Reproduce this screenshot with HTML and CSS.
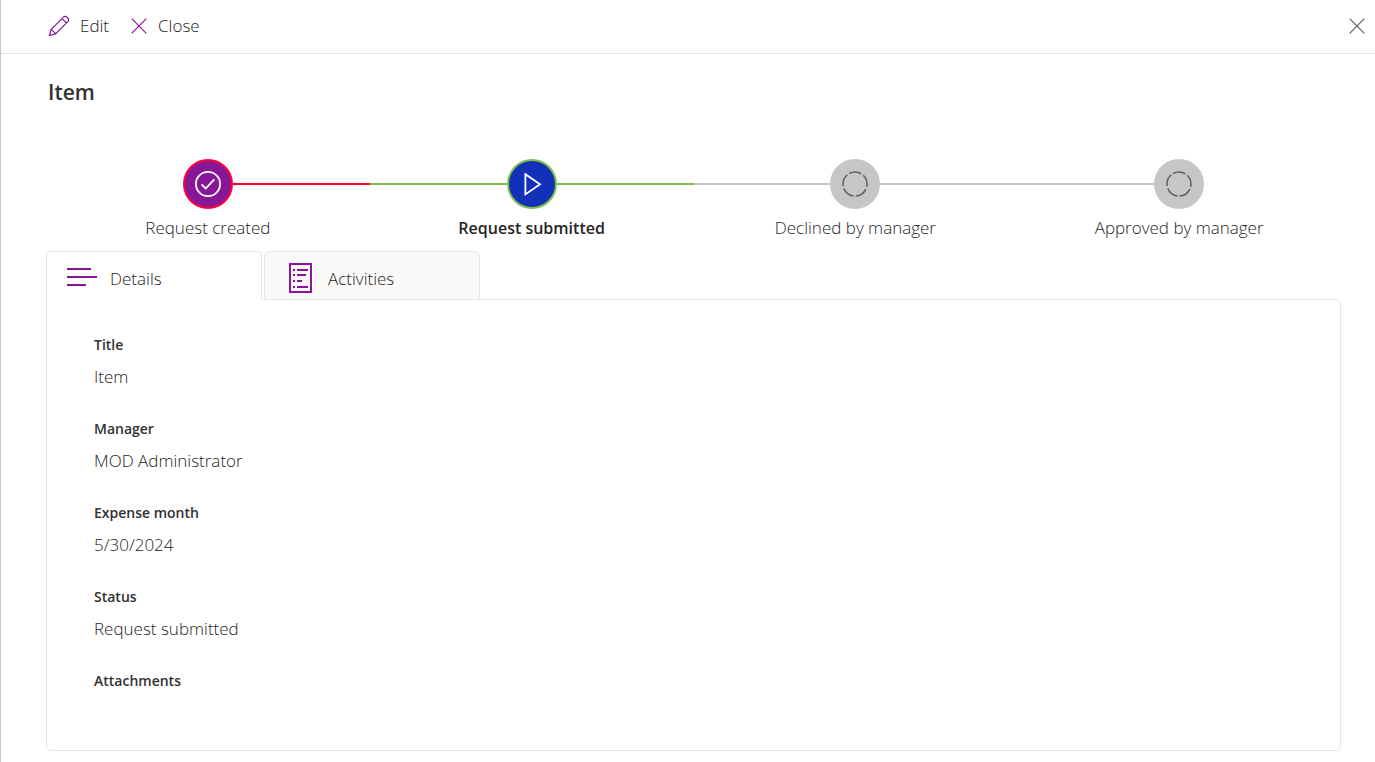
FILE: index.html
```html
<!DOCTYPE html>
<html lang="en">

<head>
    <meta charset="utf-8">
    <title>Item</title>
    <meta name="viewport" content="width=device-width, initial-scale=1">
    <link rel="stylesheet" href="styles.css">
</head>

<body>
    <header class="toolbar">
        <button type="button" class="btn_cmd">
            <svg class="icon" width="22" height="22" viewBox="0 0 22 22">
                <path d="M1.5 20.5l1.6-6L15.4 2.2a2.5 2.5 0 0 1 3.6 0l.8.8a2.5 2.5 0 0 1 0 3.6L7.5 18.9zM3.1 14.5a3 3 0 0 1 2.2 2.2 3 3 0 0 1 2.2 2.2M14 3.6l4.4 4.4" />
            </svg>
            <span>Edit</span>
        </button>
        <button type="button" class="btn_cmd">
            <svg class="icon" width="18" height="18" viewBox="0 0 18 18">
                <path d="M1.7 1.7l14.6 14.6M16.3 1.7L1.7 16.3" />
            </svg>
            <span>Close</span>
        </button>
        <button type="button" class="btn_dismiss" aria-label="Close panel">
            <svg width="16" height="16" viewBox="0 0 16 16">
                <path d="M.7.7l14.6 14.6M15.3.7L.7 15.3" />
            </svg>
        </button>
    </header>

    <main class="content">
        <h1>Item</h1>

        <ol class="steps">
            <li class="step created">
                <span class="circle">
                    <svg width="26" height="26" viewBox="0 0 26 26">
                        <circle cx="13" cy="13" r="12.1" />
                        <path d="M6.6 13.4l4.1 4.1 8.6-9.2" />
                    </svg>
                </span>
                <span class="step_name">Request created</span>
            </li>
            <li class="step current" aria-current="step">
                <span class="circle">
                    <svg width="26" height="26" viewBox="0 0 26 26">
                        <path d="M6.4 3.2v20.2L21 13.3z" />
                    </svg>
                </span>
                <span class="step_name">Request submitted</span>
            </li>
            <li class="step">
                <span class="circle">
                    <svg width="26" height="26" viewBox="0 0 26 26">
                        <circle cx="13" cy="13" r="12" pathLength="100" stroke-dasharray="17 3" stroke-dashoffset="13" />
                    </svg>
                </span>
                <span class="step_name">Declined by manager</span>
            </li>
            <li class="step">
                <span class="circle">
                    <svg width="26" height="26" viewBox="0 0 26 26">
                        <circle cx="13" cy="13" r="12" pathLength="100" stroke-dasharray="17 3" stroke-dashoffset="13" />
                    </svg>
                </span>
                <span class="step_name">Approved by manager</span>
            </li>
        </ol>

        <div class="tabs" role="tablist">
            <button type="button" class="tab active" id="tab_details" role="tab" aria-selected="true" aria-controls="details">
                <svg class="icon_tab" width="30" height="30" viewBox="0 0 30 30">
                    <path d="M0 6h24M0 14h30M0 22h19" />
                </svg>
                <span class="tab_name">Details</span>
            </button>
            <button type="button" class="tab" id="tab_activities" role="tab" aria-selected="false">
                <svg class="icon_tab" width="30" height="30" viewBox="0 0 30 30">
                    <path d="M5 1h21v28H5z" />
                    <path d="M8 7h2M12 7h11M8 12h2M12 12h9M8 18h2M12 18h5M8 24h2M12 24h11" />
                </svg>
                <span class="tab_name">Activities</span>
            </button>
        </div>

        <section class="panel" id="details" role="tabpanel" aria-labelledby="tab_details">
            <dl>
                <div class="field">
                    <dt>Title</dt>
                    <dd>Item</dd>
                </div>
                <div class="field">
                    <dt>Manager</dt>
                    <dd>MOD Administrator</dd>
                </div>
                <div class="field">
                    <dt>Expense month</dt>
                    <dd>5/30/2024</dd>
                </div>
                <div class="field">
                    <dt>Status</dt>
                    <dd>Request submitted</dd>
                </div>
                <div class="field">
                    <dt>Attachments</dt>
                </div>
            </dl>
        </section>
    </main>
</body>

</html>
```
FILE: styles.css
```css
* {
    margin: 0;
    padding: 0;
    box-sizing: border-box;
}

body {
    min-height: 100vh;
    border-left: 1px solid #c8c8c8;
    background-color: white;
    color: #252423;
    font-family: "Open Sans", "Noto Sans", sans-serif;
    font-size: 17px;
    font-weight: 300;
    line-height: 24px;
}

button {
    border: none;
    background: none;
    color: inherit;
    font: inherit;
    cursor: pointer;
}

svg {
    display: block;
    flex: none;
    fill: none;
    stroke: #605e5c;
    stroke-width: 1.2;
}

.toolbar {
    display: flex;
    align-items: center;
    gap: 21px;
    height: 54px;
    padding: 0 10px 2px 47px;
    border-bottom: 1px solid #e5e5e5;
}

.btn_cmd {
    display: flex;
    align-items: center;
    gap: 10px;
}

.icon {
    stroke: #881798;
}

.btn_dismiss {
    margin-left: auto;
}

.content {
    padding: 24px 34px 11px 45px;
}

h1 {
    padding-left: 2px;
    color: #323130;
    font-size: 21px;
    font-weight: 600;
    line-height: 28px;
}

.steps {
    display: flex;
    margin-top: 53px;
    list-style-type: none;
}

.step {
    display: grid;
    grid-template-columns: 1fr 50px 1fr;
    align-items: center;
    flex: 1;
    text-align: center;
    --line: #c8c6c4;
}

.step::before,
.step::after {
    content: "";
    height: 2px;
    background-color: var(--line);
}

.step::after {
    grid-column: 3;
    grid-row: 1;
}

.step:first-child::before,
.step:last-child::after {
    background: none;
}

.circle {
    display: flex;
    align-items: center;
    justify-content: center;
    height: 50px;
    border: 2px solid var(--line);
    border-radius: 50%;
    background-color: #c8c6c4;
}

.circle svg {
    stroke-width: 1.5;
}

.step_name {
    grid-column: 1 / 4;
    margin-top: 7px;
}

.created {
    --line: #ff0033;
}

.created .circle {
    background-color: #881798;
}

.current {
    --line: #7cc04b;
    font-size: 16px;
    font-weight: 600;
}

.current .circle {
    background-color: #1230b8;
}

.created svg,
.current svg {
    stroke: white;
    stroke-width: 1.8;
}

.tabs {
    display: flex;
    gap: 2px;
    margin-top: 11px;
}

.tab {
    display: flex;
    align-items: center;
    gap: 13px;
    width: 216px;
    height: 49px;
    padding: 5px 20px 0;
    border: 1px solid #e5e5e5;
    border-radius: 5px 5px 0 0;
    background-color: #faf9f8;
}

.tab_name {
    padding-top: 2px;
}

/* sits over the top border of the panel */
.tab.active {
    position: relative;
    border-bottom-color: white;
    background-color: white;
}

.icon_tab {
    stroke: #881798;
    stroke-width: 2;
}

.panel {
    margin-top: -1px;
    padding: 35px 47px 59px;
    border: 1px solid #e5e5e5;
    border-radius: 0 5px 5px 5px;
}

.field + .field {
    margin-top: 30px;
}

dt {
    color: #323130;
    font-size: 14px;
    font-weight: 600;
    line-height: 20px;
}

dd {
    margin-top: 10px;
}
```
